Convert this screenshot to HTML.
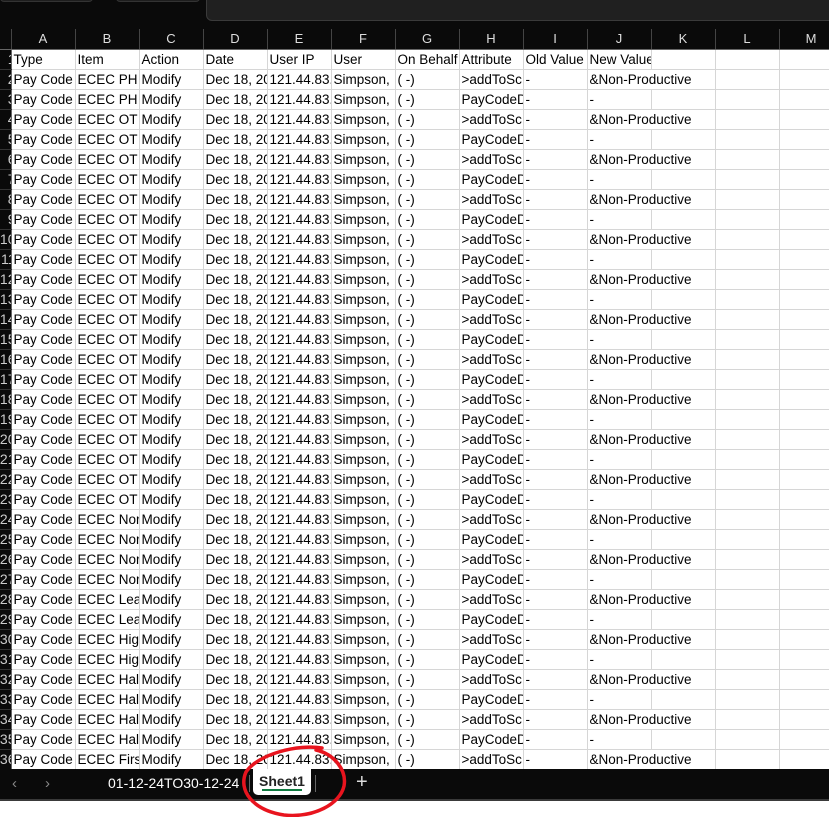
<!DOCTYPE html>
<html><head><meta charset="utf-8"><style>
*{margin:0;padding:0;box-sizing:border-box}
body{width:829px;height:817px;background:#fff;position:relative;overflow:hidden;font-family:"Liberation Sans",sans-serif}
#top{position:absolute;left:0;top:0;width:829px;height:29px;background:#0a0a0a}
#top .t1{position:absolute;left:0;top:-6px;width:93px;height:8px;background:#1e1e1e;border:1px solid #333;border-radius:4px}
#top .t2{position:absolute;left:116px;top:-6px;width:84px;height:8px;background:#1e1e1e;border:1px solid #333;border-radius:4px}
#top .p{position:absolute;left:206px;top:-6px;width:640px;height:27px;background:#202020;border:1px solid #3a3a3a;border-radius:6px}
table{position:absolute;left:0;top:29px;border-collapse:collapse;table-layout:fixed;width:843px}
td,th{height:20px;white-space:nowrap;overflow:hidden;font-size:13.5px;font-weight:normal;line-height:19px;padding:0 0 0 2px;text-align:left;color:#000;border-right:1px solid #d6d6d6;border-bottom:1px solid #d6d6d6}
tr.h th{background:#0a0a0a;color:#ddd;text-align:center;border-right:1px solid #444;border-bottom:1px solid #666;padding:0;height:20px;font-size:13px}
th.r{background:#0a0a0a;color:#ccc;text-align:right;padding:0;border-right:1px solid #666;border-bottom:1px solid #333;font-size:14px;direction:rtl;text-indent:-5px}
#tabs{position:absolute;left:0;top:769px;width:829px;height:32px;background:#0a0a0a;border-bottom:2px solid #3a3a3a;color:#fff}
.sheet{position:absolute;left:253px;top:0;width:58px;height:26px;background:#fff;border-radius:0 0 5px 5px;color:#222;font-size:14px;font-weight:bold;text-align:center;line-height:24px}
.sheet:after{content:"";position:absolute;left:9px;right:9px;bottom:4px;height:2px;background:#107c41}
</style></head><body>
<div id="top"><div class="t1"></div><div class="t2"></div><div class="p"></div></div>
<table>
<colgroup><col style="width:11px"><col style="width:64px"><col style="width:64px"><col style="width:64px"><col style="width:64px"><col style="width:64px"><col style="width:64px"><col style="width:64px"><col style="width:64px"><col style="width:64px"><col style="width:64px"><col style="width:64px"><col style="width:64px"><col style="width:64px"></colgroup>
<tr class="h"><th></th><th>A</th><th>B</th><th>C</th><th>D</th><th>E</th><th>F</th><th>G</th><th>H</th><th>I</th><th>J</th><th>K</th><th>L</th><th>M</th></tr>
<tr><th class="r">1</th><td>Type</td><td>Item</td><td>Action</td><td>Date</td><td>User IP</td><td>User</td><td>On Behalf</td><td>Attribute</td><td>Old Value</td><td>New Value</td><td></td><td></td><td></td></tr>
<tr><th class="r">2</th><td>Pay Code (Edit)</td><td>ECEC PH 1.5x</td><td>Modify</td><td>Dec 18, 2024</td><td>121.44.83.1</td><td>Simpson,</td><td>( -)</td><td>&gt;addToSc</td><td>-</td><td colspan="2">&amp;Non-Productive</td><td></td><td></td></tr>
<tr><th class="r">3</th><td>Pay Code (Edit)</td><td>ECEC PH 1.5x</td><td>Modify</td><td>Dec 18, 2024</td><td>121.44.83.1</td><td>Simpson,</td><td>( -)</td><td>PayCodeD</td><td>-</td><td>-</td><td></td><td></td><td></td></tr>
<tr><th class="r">4</th><td>Pay Code (Edit)</td><td>ECEC OT 2.0x</td><td>Modify</td><td>Dec 18, 2024</td><td>121.44.83.1</td><td>Simpson,</td><td>( -)</td><td>&gt;addToSc</td><td>-</td><td colspan="2">&amp;Non-Productive</td><td></td><td></td></tr>
<tr><th class="r">5</th><td>Pay Code (Edit)</td><td>ECEC OT 2.0x</td><td>Modify</td><td>Dec 18, 2024</td><td>121.44.83.1</td><td>Simpson,</td><td>( -)</td><td>PayCodeD</td><td>-</td><td>-</td><td></td><td></td><td></td></tr>
<tr><th class="r">6</th><td>Pay Code (Edit)</td><td>ECEC OT 2.0x</td><td>Modify</td><td>Dec 18, 2024</td><td>121.44.83.1</td><td>Simpson,</td><td>( -)</td><td>&gt;addToSc</td><td>-</td><td colspan="2">&amp;Non-Productive</td><td></td><td></td></tr>
<tr><th class="r">7</th><td>Pay Code (Edit)</td><td>ECEC OT 2.0x</td><td>Modify</td><td>Dec 18, 2024</td><td>121.44.83.1</td><td>Simpson,</td><td>( -)</td><td>PayCodeD</td><td>-</td><td>-</td><td></td><td></td><td></td></tr>
<tr><th class="r">8</th><td>Pay Code (Edit)</td><td>ECEC OT 2.0x</td><td>Modify</td><td>Dec 18, 2024</td><td>121.44.83.1</td><td>Simpson,</td><td>( -)</td><td>&gt;addToSc</td><td>-</td><td colspan="2">&amp;Non-Productive</td><td></td><td></td></tr>
<tr><th class="r">9</th><td>Pay Code (Edit)</td><td>ECEC OT 2.0x</td><td>Modify</td><td>Dec 18, 2024</td><td>121.44.83.1</td><td>Simpson,</td><td>( -)</td><td>PayCodeD</td><td>-</td><td>-</td><td></td><td></td><td></td></tr>
<tr><th class="r">10</th><td>Pay Code (Edit)</td><td>ECEC OT 2.0x</td><td>Modify</td><td>Dec 18, 2024</td><td>121.44.83.1</td><td>Simpson,</td><td>( -)</td><td>&gt;addToSc</td><td>-</td><td colspan="2">&amp;Non-Productive</td><td></td><td></td></tr>
<tr><th class="r">11</th><td>Pay Code (Edit)</td><td>ECEC OT 2.0x</td><td>Modify</td><td>Dec 18, 2024</td><td>121.44.83.1</td><td>Simpson,</td><td>( -)</td><td>PayCodeD</td><td>-</td><td>-</td><td></td><td></td><td></td></tr>
<tr><th class="r">12</th><td>Pay Code (Edit)</td><td>ECEC OT 1.5x</td><td>Modify</td><td>Dec 18, 2024</td><td>121.44.83.1</td><td>Simpson,</td><td>( -)</td><td>&gt;addToSc</td><td>-</td><td colspan="2">&amp;Non-Productive</td><td></td><td></td></tr>
<tr><th class="r">13</th><td>Pay Code (Edit)</td><td>ECEC OT 1.5x</td><td>Modify</td><td>Dec 18, 2024</td><td>121.44.83.1</td><td>Simpson,</td><td>( -)</td><td>PayCodeD</td><td>-</td><td>-</td><td></td><td></td><td></td></tr>
<tr><th class="r">14</th><td>Pay Code (Edit)</td><td>ECEC OT 1.5x</td><td>Modify</td><td>Dec 18, 2024</td><td>121.44.83.1</td><td>Simpson,</td><td>( -)</td><td>&gt;addToSc</td><td>-</td><td colspan="2">&amp;Non-Productive</td><td></td><td></td></tr>
<tr><th class="r">15</th><td>Pay Code (Edit)</td><td>ECEC OT 1.5x</td><td>Modify</td><td>Dec 18, 2024</td><td>121.44.83.1</td><td>Simpson,</td><td>( -)</td><td>PayCodeD</td><td>-</td><td>-</td><td></td><td></td><td></td></tr>
<tr><th class="r">16</th><td>Pay Code (Edit)</td><td>ECEC OT 1.5x</td><td>Modify</td><td>Dec 18, 2024</td><td>121.44.83.1</td><td>Simpson,</td><td>( -)</td><td>&gt;addToSc</td><td>-</td><td colspan="2">&amp;Non-Productive</td><td></td><td></td></tr>
<tr><th class="r">17</th><td>Pay Code (Edit)</td><td>ECEC OT 1.5x</td><td>Modify</td><td>Dec 18, 2024</td><td>121.44.83.1</td><td>Simpson,</td><td>( -)</td><td>PayCodeD</td><td>-</td><td>-</td><td></td><td></td><td></td></tr>
<tr><th class="r">18</th><td>Pay Code (Edit)</td><td>ECEC OT 1.5x</td><td>Modify</td><td>Dec 18, 2024</td><td>121.44.83.1</td><td>Simpson,</td><td>( -)</td><td>&gt;addToSc</td><td>-</td><td colspan="2">&amp;Non-Productive</td><td></td><td></td></tr>
<tr><th class="r">19</th><td>Pay Code (Edit)</td><td>ECEC OT 1.5x</td><td>Modify</td><td>Dec 18, 2024</td><td>121.44.83.1</td><td>Simpson,</td><td>( -)</td><td>PayCodeD</td><td>-</td><td>-</td><td></td><td></td><td></td></tr>
<tr><th class="r">20</th><td>Pay Code (Edit)</td><td>ECEC OT 0.5x</td><td>Modify</td><td>Dec 18, 2024</td><td>121.44.83.1</td><td>Simpson,</td><td>( -)</td><td>&gt;addToSc</td><td>-</td><td colspan="2">&amp;Non-Productive</td><td></td><td></td></tr>
<tr><th class="r">21</th><td>Pay Code (Edit)</td><td>ECEC OT 0.5x</td><td>Modify</td><td>Dec 18, 2024</td><td>121.44.83.1</td><td>Simpson,</td><td>( -)</td><td>PayCodeD</td><td>-</td><td>-</td><td></td><td></td><td></td></tr>
<tr><th class="r">22</th><td>Pay Code (Edit)</td><td>ECEC OT 0.5x</td><td>Modify</td><td>Dec 18, 2024</td><td>121.44.83.1</td><td>Simpson,</td><td>( -)</td><td>&gt;addToSc</td><td>-</td><td colspan="2">&amp;Non-Productive</td><td></td><td></td></tr>
<tr><th class="r">23</th><td>Pay Code (Edit)</td><td>ECEC OT 0.5x</td><td>Modify</td><td>Dec 18, 2024</td><td>121.44.83.1</td><td>Simpson,</td><td>( -)</td><td>PayCodeD</td><td>-</td><td>-</td><td></td><td></td><td></td></tr>
<tr><th class="r">24</th><td>Pay Code (Edit)</td><td>ECEC Normal</td><td>Modify</td><td>Dec 18, 2024</td><td>121.44.83.1</td><td>Simpson,</td><td>( -)</td><td>&gt;addToSc</td><td>-</td><td colspan="2">&amp;Non-Productive</td><td></td><td></td></tr>
<tr><th class="r">25</th><td>Pay Code (Edit)</td><td>ECEC Normal</td><td>Modify</td><td>Dec 18, 2024</td><td>121.44.83.1</td><td>Simpson,</td><td>( -)</td><td>PayCodeD</td><td>-</td><td>-</td><td></td><td></td><td></td></tr>
<tr><th class="r">26</th><td>Pay Code (Edit)</td><td>ECEC Normal</td><td>Modify</td><td>Dec 18, 2024</td><td>121.44.83.1</td><td>Simpson,</td><td>( -)</td><td>&gt;addToSc</td><td>-</td><td colspan="2">&amp;Non-Productive</td><td></td><td></td></tr>
<tr><th class="r">27</th><td>Pay Code (Edit)</td><td>ECEC Normal</td><td>Modify</td><td>Dec 18, 2024</td><td>121.44.83.1</td><td>Simpson,</td><td>( -)</td><td>PayCodeD</td><td>-</td><td>-</td><td></td><td></td><td></td></tr>
<tr><th class="r">28</th><td>Pay Code (Edit)</td><td>ECEC Leave</td><td>Modify</td><td>Dec 18, 2024</td><td>121.44.83.1</td><td>Simpson,</td><td>( -)</td><td>&gt;addToSc</td><td>-</td><td colspan="2">&amp;Non-Productive</td><td></td><td></td></tr>
<tr><th class="r">29</th><td>Pay Code (Edit)</td><td>ECEC Leave</td><td>Modify</td><td>Dec 18, 2024</td><td>121.44.83.1</td><td>Simpson,</td><td>( -)</td><td>PayCodeD</td><td>-</td><td>-</td><td></td><td></td><td></td></tr>
<tr><th class="r">30</th><td>Pay Code (Edit)</td><td>ECEC High</td><td>Modify</td><td>Dec 18, 2024</td><td>121.44.83.1</td><td>Simpson,</td><td>( -)</td><td>&gt;addToSc</td><td>-</td><td colspan="2">&amp;Non-Productive</td><td></td><td></td></tr>
<tr><th class="r">31</th><td>Pay Code (Edit)</td><td>ECEC High</td><td>Modify</td><td>Dec 18, 2024</td><td>121.44.83.1</td><td>Simpson,</td><td>( -)</td><td>PayCodeD</td><td>-</td><td>-</td><td></td><td></td><td></td></tr>
<tr><th class="r">32</th><td>Pay Code (Edit)</td><td>ECEC Half</td><td>Modify</td><td>Dec 18, 2024</td><td>121.44.83.1</td><td>Simpson,</td><td>( -)</td><td>&gt;addToSc</td><td>-</td><td colspan="2">&amp;Non-Productive</td><td></td><td></td></tr>
<tr><th class="r">33</th><td>Pay Code (Edit)</td><td>ECEC Half</td><td>Modify</td><td>Dec 18, 2024</td><td>121.44.83.1</td><td>Simpson,</td><td>( -)</td><td>PayCodeD</td><td>-</td><td>-</td><td></td><td></td><td></td></tr>
<tr><th class="r">34</th><td>Pay Code (Edit)</td><td>ECEC Half</td><td>Modify</td><td>Dec 18, 2024</td><td>121.44.83.1</td><td>Simpson,</td><td>( -)</td><td>&gt;addToSc</td><td>-</td><td colspan="2">&amp;Non-Productive</td><td></td><td></td></tr>
<tr><th class="r">35</th><td>Pay Code (Edit)</td><td>ECEC Half</td><td>Modify</td><td>Dec 18, 2024</td><td>121.44.83.1</td><td>Simpson,</td><td>( -)</td><td>PayCodeD</td><td>-</td><td>-</td><td></td><td></td><td></td></tr>
<tr><th class="r">36</th><td>Pay Code (Edit)</td><td>ECEC First</td><td>Modify</td><td>Dec 18, 2024</td><td>121.44.83.1</td><td>Simpson,</td><td>( -)</td><td>&gt;addToSc</td><td>-</td><td colspan="2">&amp;Non-Productive</td><td></td><td></td></tr>
</table>
<div id="tabs">
<div style="position:absolute;left:12px;top:6px;font-size:15px;color:#888">&lsaquo;</div>
<div style="position:absolute;left:45px;top:6px;font-size:15px;color:#888">&rsaquo;</div>
<div style="position:absolute;left:108px;top:6px;font-size:14px;color:#fff">01-12-24TO30-12-24</div>
<div style="position:absolute;left:249px;top:6px;width:1px;height:17px;background:#666"></div>
<div class="sheet">Sheet1</div>
<div style="position:absolute;left:315px;top:6px;width:1px;height:17px;background:#666"></div>
<div style="position:absolute;left:356px;top:2px;font-size:20px;color:#ddd">+</div>
</div>
<svg style="position:absolute;left:0;top:0" width="829" height="817">
<path d="M322 748 C298 744 258 754 246 772 C238 790 252 810 284 815 C314 818 340 804 344 786 C347 770 334 754 316 750" fill="none" stroke="#e8141e" stroke-width="3.5" stroke-linecap="round"/>
</svg>
</body></html>
